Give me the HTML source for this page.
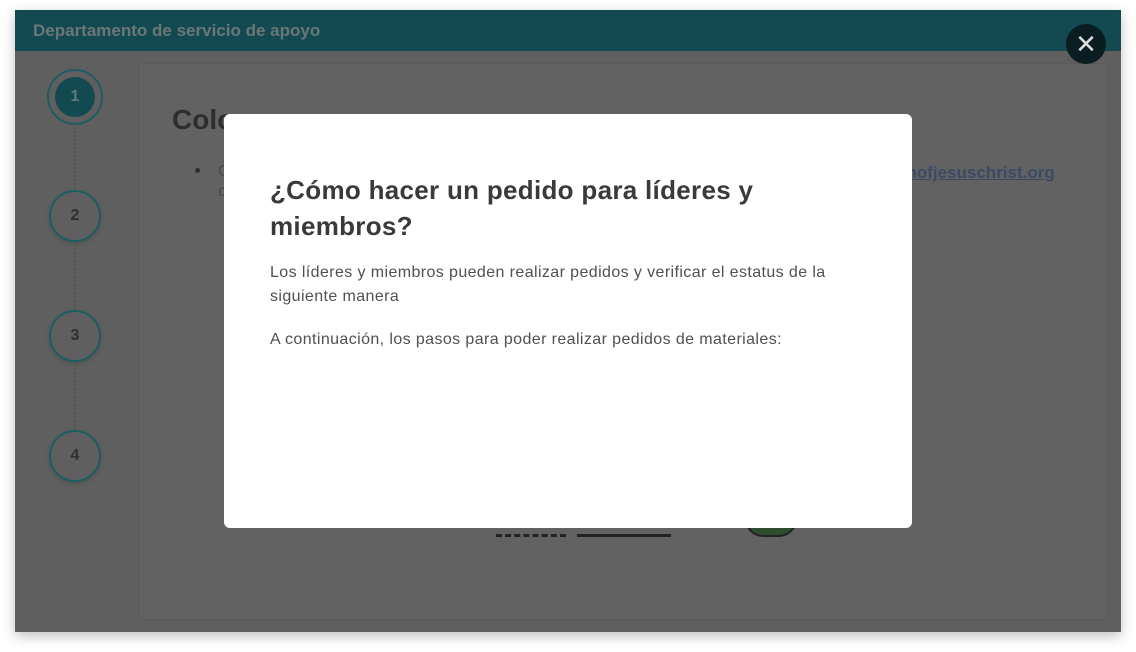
<!DOCTYPE html>
<html><head><meta charset="utf-8"><style>
*{margin:0;padding:0;box-sizing:border-box}
body{width:1136px;height:652px;background:#fff;position:relative;overflow:hidden;font-family:"Liberation Sans",sans-serif}
.frame{position:absolute;left:15px;top:10px;width:1106px;height:622px;background:#5f5f5f;box-shadow:0 4px 12px rgba(0,0,0,.25)}
.hdr{position:absolute;left:0;top:0;width:1106px;height:41px;background:#134a52}
.hdr span{position:absolute;left:18px;top:11px;font-size:17px;font-weight:bold;color:#6b7777}
.card{position:absolute;left:123px;top:53px;width:970px;height:557px;background:#626262;border:1px solid #5a5a5a;border-radius:3px}
.circ{position:absolute;left:34px;width:52px;height:52px;border-radius:50%;border:2px solid #1d5c63;color:#2f2f2f;font-weight:bold;font-size:16px;display:flex;align-items:center;justify-content:center;box-shadow:0 2px 4px rgba(0,0,0,.15)}
.dots{position:absolute;left:59px;width:0;border-left:2px dotted #555}
.c1{position:absolute;left:32px;top:59px;width:56px;height:56px;border-radius:50%;border:2px solid #1d5c63}
.c1 i{position:absolute;left:6px;top:6px;width:40px;height:40px;border-radius:50%;background:#134a52;color:#5f7a7c;font-style:normal;font-weight:bold;font-size:16px;display:flex;align-items:center;justify-content:center}
.modal{position:absolute;left:224px;top:114px;width:688px;height:414px;background:#fff;border-radius:6px}
h1{position:absolute;left:46px;top:58px;width:560px;font-size:26px;line-height:36px;color:#3a3a3a;font-weight:bold;letter-spacing:.3px}
p{position:absolute;left:46px;font-size:16px;line-height:24px;color:#505050;width:600px;letter-spacing:.4px}
.x{position:absolute;left:1066px;top:24px;width:40px;height:40px;border-radius:50%;background:#0a1e21;color:#ddd;font-size:26px;display:flex;align-items:center;justify-content:center}
</style></head><body>
<div class="frame">
<div class="hdr"><span>Departamento de servicio de apoyo</span></div>
<div class="c1"><i>1</i></div>
<div class="dots" style="top:117px;height:62px"></div>
<div class="circ" style="top:180px">2</div>
<div class="dots" style="top:235px;height:64px"></div>
<div class="circ" style="top:300px">3</div>
<div class="dots" style="top:355px;height:64px"></div>
<div class="circ" style="top:420px">4</div>
<div class="card">
<div style="position:absolute;left:33px;top:40px;font-size:28px;font-weight:bold;color:#2e2e2e">Colo</div>
<div style="position:absolute;left:56px;top:104px;width:5px;height:5px;border-radius:50%;background:#2e2e2e"></div>
<div style="position:absolute;left:79px;top:98px;font-size:16px;line-height:20px;color:#4a4a4a">C<br>c</div>
<div style="position:absolute;left:758px;top:99px;font-size:17px;font-weight:bold;color:#3c4a66;text-decoration:underline">chofjesuschrist.org</div>
<div style="position:absolute;left:357px;top:470px;width:70px;border-top:3px dashed #222"></div>
<div style="position:absolute;left:438px;top:470px;width:94px;height:3px;background:#222"></div>
<div style="position:absolute;left:606px;top:455px;width:52px;height:18px;border-radius:0 0 26px 26px;background:#2d4d2d;border:2px solid #222;border-top:none"></div>
</div>
</div>
<div class="modal">
<h1>¿Cómo hacer un pedido para líderes y miembros?</h1>
<p style="top:147px">Los líderes y miembros pueden realizar pedidos y verificar el estatus de la siguiente manera</p>
<p style="top:214px">A continuación, los pasos para poder realizar pedidos de materiales:</p>
</div>
<div class="x">✕</div>
</body></html>
